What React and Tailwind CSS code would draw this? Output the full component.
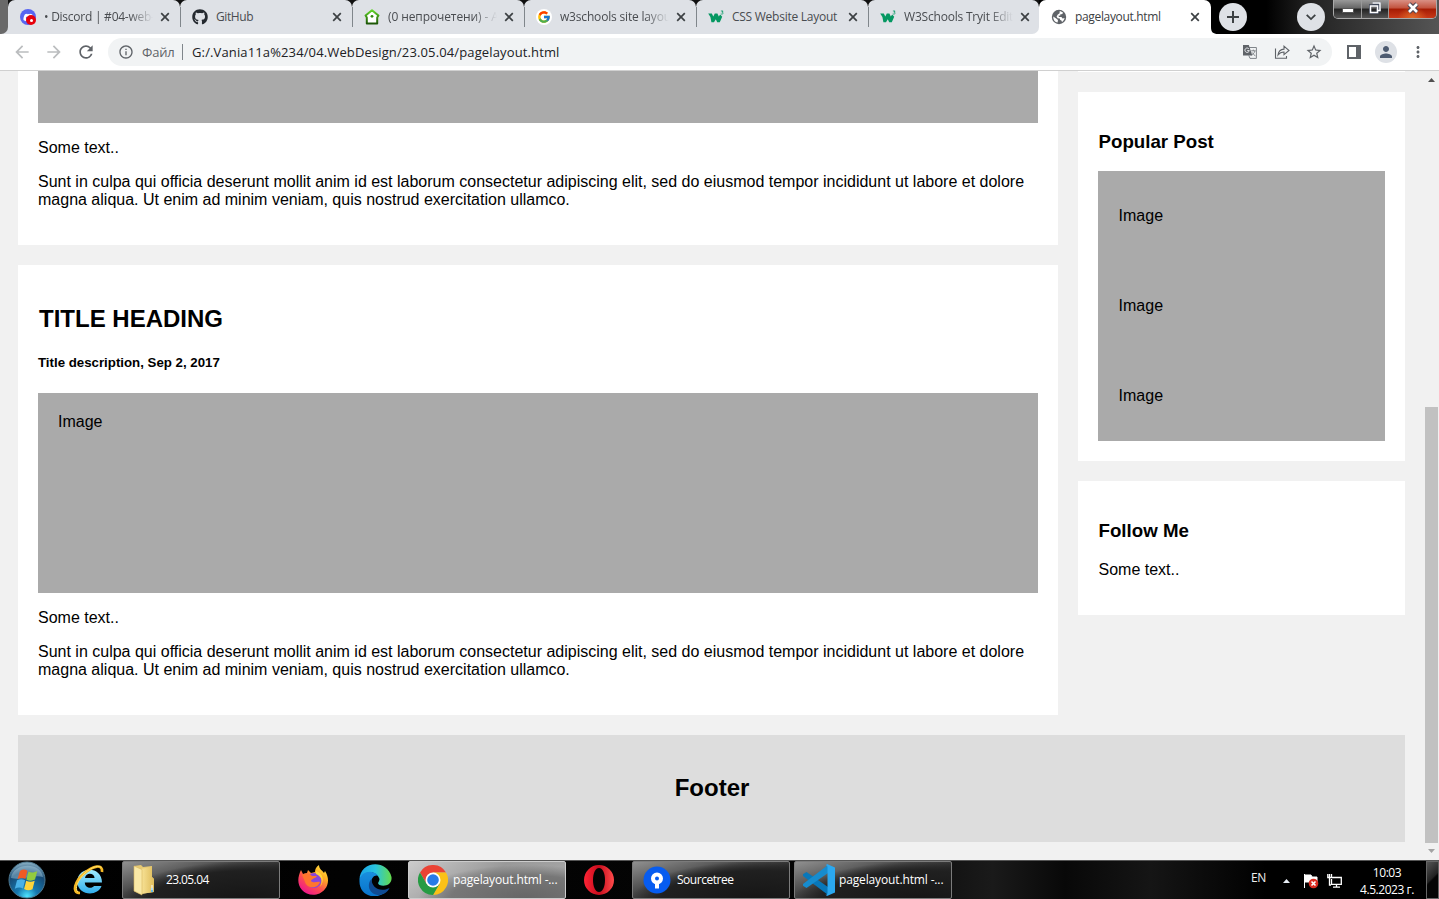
import React from 'react';
import { FaGithub, FaDiscord } from 'react-icons/fa';
import { FcGoogle } from 'react-icons/fc';
import { MdPerson, MdRefresh, MdArrowBack, MdArrowForward, MdInfoOutline, MdStarBorder, MdMoreVert } from 'react-icons/md';

const UI = "font-['Open_Sans','Noto_Sans',sans-serif]";

function Close() {
  return (
    <svg className="h-[10px] w-[10px] shrink-0" viewBox="0 0 10 10">
      <path d="M1.2 1.2l7.6 7.6M8.8 1.2L1.2 8.8" stroke="#3c4043" strokeWidth="1.7" />
    </svg>
  );
}

function DiscordIcon() {
  return (
    <span className="relative flex h-4 w-4 items-center justify-center rounded-full bg-[#5865f2]">
      <FaDiscord className="h-[11px] w-[11px] text-white" />
      <span className="absolute top-[6px] left-[6px] flex h-[10px] w-[10px] items-center justify-center rounded-full bg-[#e8000b]">
        <span className="h-[3px] w-[3px] rounded-full bg-white" />
      </span>
    </span>
  );
}

function HomeIcon() {
  return (
    <svg className="h-4 w-4" viewBox="0 0 16 16">
      <defs>
        <linearGradient id="hg" x1="0" y1="0" x2="0" y2="1"><stop offset="0" stopColor="#62d52a" /><stop offset="1" stopColor="#1d5708" /></linearGradient>
      </defs>
      <path d="M8 1.2L14.4 6.6 13.2 8.6V14.6H2.8V8.6L1.6 6.6Z" fill="#fff" stroke="url(#hg)" strokeWidth="2" strokeLinejoin="round" />
      <circle cx="8" cy="7.3" r="1.4" fill="#318a10" />
    </svg>
  );
}

function W3Icon() {
  return (
    <svg className="h-4 w-4" viewBox="0 0 16 16">
      <path d="M.2 4.6H3.8L5.3 7.4 6.8 4.4H9.4L10.8 7.6 12.2 5.6 14.2 7.8 11.8 13.2H9.2L7.8 10.2 6 13.2H3.4L2.4 8Z" fill="#059862" />
      <path d="M12.9 2h2.2l-1.1 1.2c1.6 0 1.3 2-.1 1.9-.5 0-.9-.2-1.1-.5" fill="none" stroke="#059862" strokeWidth=".8" />
    </svg>
  );
}

function GlobeIcon() {
  return (
    <svg className="h-4 w-4" viewBox="0 0 16 16">
      <circle cx="8" cy="8" r="7.2" fill="#5f6368" />
      <path d="M8.6 2.2C10 2.2 11.2 2.8 12.2 3.8L11 5.2 9.6 5 9.2 6.4 7.4 6.8 8 8H10.4L11.6 9.6 13.6 9C13.2 10.6 12.4 12 11 13L10.4 11.6 9.2 11 8.8 9.4 6.6 9.2 5.6 7.6 6.8 5.6 8.6 4.2Z" fill="#fff" />
      <path d="M2.2 7.4L5.2 9.4 7 11 6.6 13.6C4 13 2 10.8 2.2 7.4Z" fill="#fff" />
    </svg>
  );
}

function TranslateIcon() {
  return (
    <svg className="h-4 w-4" viewBox="0 0 16 16">
      <path d="M6.5 3.5H14.4V14.4H8L6.8 11.5" fill="#f1f3f4" stroke="#80858a" strokeWidth="1" />
      <path d="M9.2 6.8H13.6M11.3 5.6V6.8M13 6.8C12.4 9 11 10.3 9.6 11M10 8.4L13.4 12.2" fill="none" stroke="#777c81" strokeWidth=".9" />
      <path d="M1 1H6.8L10.3 11.4H1Z" fill="#5f6368" />
      <path d="M6.9 4.9A2.2 2.2 0 1 0 7.3 6.6H5.2" fill="none" stroke="#e8eaed" strokeWidth="1" />
    </svg>
  );
}

const tabs = [
  { icon: <DiscordIcon />, title: '• Discord | #04-web-design', fade: true, track: 'tracking-[-0.25px]', width: 'w-[172px]' },
  { icon: <FaGithub className="h-4 w-4 text-[#24292f]" />, title: 'GitHub', track: 'tracking-[-0.4px]', width: 'w-[172px]' },
  { icon: <HomeIcon />, title: '(0 непрочетени) - АБВ', fade: true, track: 'tracking-[-0.1px]', width: 'w-[172px]' },
  { icon: <span className="flex h-4 w-4 items-center justify-center rounded-full bg-white"><FcGoogle className="h-[14px] w-[14px]" /></span>, title: 'w3schools site layout', fade: true, track: 'tracking-[-0.18px]', width: 'w-[172px]' },
  { icon: <W3Icon />, title: 'CSS Website Layout', track: 'tracking-[-0.26px]', width: 'w-[172px]' },
  { icon: <W3Icon />, title: 'W3Schools Tryit Editor', fade: true, track: 'tracking-[-0.2px]', width: 'w-[171px]' },
];

function Tab({ t, last }) {
  return (
    <div className={`h-[34px] ${last ? 'bg-[linear-gradient(#111_50%,#fff_50%)]' : 'bg-[linear-gradient(#111_50%,#dee1e6_50%)]'}`}>
      <div className={`relative flex h-[34px] items-center rounded-t-[7px] bg-[#dee1e6] pl-3 ${t.width} ${last ? 'rounded-br-[7px]' : ''}`}>
        {t.icon}
        <span className={`ml-2 w-[109px] overflow-hidden whitespace-nowrap text-[12px] leading-4 text-[#494c50] ${t.track} ${t.fade ? 'mask-r-from-78% mask-r-to-100%' : ''}`}>{t.title}</span>
        <span className="ml-[7px] flex"><Close /></span>
        {!last && <span className="absolute top-[7px] right-[-1px] z-10 h-[20px] w-px bg-[#80868b]" />}
      </div>
    </div>
  );
}

function TabStrip() {
  return (
    <div className="flex h-[34px] shrink-0 bg-[linear-gradient(90deg,#686868_0,#555_10px,#000_100px,#000_88%,#222_91%,#555_100%)]">
      <div className="w-2 bg-[#dee1e6]"><div className="h-full w-full rounded-br-[7px] bg-[#696969]" /></div>
      {tabs.map((t, i) => <Tab key={t.title} t={t} last={i === 5} />)}
      <div className="flex w-[172px] items-center rounded-t-[7px] bg-white pl-3">
        <GlobeIcon />
        <span className="ml-2 w-[108px] text-[12px] leading-4 tracking-[-0.34px] text-[#3c4043]">pagelayout.html</span>
        <span className="ml-[7px] flex"><Close /></span>
      </div>
      <div className="flex w-2 items-end">
        <svg className="h-[7px] w-[7px]" viewBox="0 0 7 7"><path d="M0 0C0 5 2 7 7 7H0Z" fill="#fff" /></svg>
      </div>
      <div className="mt-[3px] flex h-7 w-7 items-center justify-center rounded-full bg-[#dee1e6]">
        <svg className="h-3 w-3" viewBox="0 0 12 12"><path d="M6 0V12M0 6H12" stroke="#3c4043" strokeWidth="2" /></svg>
      </div>
      <div className="mt-[3px] ml-[50px] flex h-7 w-7 items-center justify-center rounded-full bg-[#dee1e6]">
        <svg className="h-[10px] w-[10px]" viewBox="0 0 10 10"><path d="M.7 2.8L5 7.1 9.3 2.8" fill="none" stroke="#3c4043" strokeWidth="1.8" /></svg>
      </div>
      <div className="ml-[8px] flex h-[19px] w-[104px] overflow-hidden rounded-b-[5px] border border-t-0 border-[#aaa]">
        <div className="flex w-[28px] justify-center border-r border-[#999] bg-[linear-gradient(#999,#666_45%,#222_50%,#555)] pt-[8px]">
          <span className="h-[5px] w-[12px] border border-[#555] bg-white" />
        </div>
        <div className="flex w-[27px] justify-center border-r border-[#999] bg-[linear-gradient(#999,#666_45%,#222_50%,#555)] pt-[2px]">
          <svg className="h-3 w-3" viewBox="0 0 12 12">
            <path d="M3.5 1h7.5v7.5H9M1 3.5h7.5V11H1Z" fill="none" stroke="#3f4758" strokeWidth="2.5" />
            <path d="M3.5 1h7.5v7.5H9M1.5 4h7V10.5h-7Z" fill="none" stroke="#fff" strokeWidth="1.5" />
          </svg>
        </div>
        <div className="flex flex-1 justify-center bg-[radial-gradient(ellipse_at_bottom,#e06a28_0,transparent_45%),linear-gradient(#d99084,#c2523d_45%,#a51c04_50%,#c83818)] pt-[2px]">
          <svg className="h-3 w-3" viewBox="0 0 12 12">
            <path d="M2 2l8 8M10 2l-8 8" stroke="#4c4552" strokeWidth="4.6" />
            <path d="M2 2l8 8M10 2l-8 8" stroke="#fff" strokeWidth="2.6" />
          </svg>
        </div>
      </div>
    </div>
  );
}

function Toolbar() {
  return (
    <div className="flex h-[37px] shrink-0 items-center border-b border-[#d0d0d0] bg-white pl-3 text-[#5f6368]">
      <MdArrowBack className="h-5 w-5 text-[#bbbdbf]" />
      <MdArrowForward className="ml-3 h-5 w-5 text-[#bbbdbf]" />
      <MdRefresh className="ml-3 h-5 w-5" />
      <div className="ml-[12px] flex h-7 w-[1224px] items-center rounded-full bg-[#f1f3f4] pl-[10px]">
        <MdInfoOutline className="h-4 w-4" />
        <span className="ml-2 w-[34px] text-[13px] leading-5 tracking-[-0.2px] whitespace-nowrap">Файл</span>
        <span className="ml-[6px] h-4 w-px bg-[#80868b]" />
        <span className="ml-[9px] flex-1 text-[13px] leading-5 tracking-[0.13px] text-[#202124]">G:/.Vania11a%234/04.WebDesign/23.05.04/pagelayout.html</span>
        <TranslateIcon />
        <svg className="ml-4 h-4 w-4" viewBox="0 0 16 16" fill="none" stroke="#5f6368" strokeWidth="1.1">
          <path d="M1.5 4.5V14.3H12.5V12" />
          <path d="M4 11C4.5 7 7 5.2 10 5.1V2.2L15 6.5 10 10.6V8C7.5 8 5.5 9 4 11Z" />
        </svg>
        <MdStarBorder className="mr-[9px] ml-[15px] h-[18px] w-[18px]" />
      </div>
      <svg className="ml-[15px] h-[14px] w-[14px]" viewBox="0 0 14 14"><path d="M0 0H14V14H0ZM2 2V12H9V2Z" fill="#5f6368" fillRule="evenodd" /></svg>
      <span className="ml-[14px] flex h-[22px] w-[22px] items-center justify-center rounded-full bg-[#dee1e6]"><MdPerson className="h-[18px] w-[18px] text-[#4c5a70]" /></span>
      <MdMoreVert className="ml-[12px] h-[18px] w-[18px]" />
    </div>
  );
}

function PostText() {
  return (
    <>
      <p className="my-4">Some text..</p>
      <p className="my-4">Sunt in culpa qui officia deserunt mollit anim id est laborum consectetur adipiscing elit, sed do eiusmod tempor incididunt ut labore et dolore<br />magna aliqua. Ut enim ad minim veniam, quis nostrud exercitation ullamco.</p>
    </>
  );
}

function Page() {
  return (
    <div className="flex h-[789px] shrink-0 overflow-hidden bg-[#f1f1f1] font-['Liberation_Sans',Arial,sans-serif] text-[16px] leading-[18px] text-black">
      <main className="w-[1424px] pl-[18px]">
        <div className="flex h-[644px] gap-5">
          <div className="w-[1040px]">
            <section className="h-[174px] bg-white px-5">
              <div className="h-[52px] bg-[#aaa]" />
              <PostText />
            </section>
            <section className="mt-5 h-[450px] bg-white px-5 pt-10">
              <h2 className="h-7 pl-px text-[24px] leading-7 font-bold">TITLE HEADING</h2>
              <h5 className="mt-[22px] h-[15px] text-[13.28px] leading-[15px] font-bold">Title description, Sep 2, 2017</h5>
              <div className="mt-[23px] h-[200px] bg-[#aaa] p-5">Image</div>
              <PostText />
            </section>
          </div>
          <aside className="w-[327px]">
            <div className="h-px bg-white" />
            <section className="mt-5 h-[369px] bg-white px-5 pt-[39px]">
              <h3 className="h-[22px] pl-[0.5px] text-[18.72px] leading-[22px] font-bold">Popular Post</h3>
              <div className="mt-[18px] bg-[#aaa] px-[20.6px]">
                {[1, 2, 3].map((n) => <p key={n} className="h-[90px] pt-9">Image</p>)}
              </div>
            </section>
            <section className="mt-5 h-[134px] bg-white px-[20.5px] pt-[39px]">
              <h3 className="h-[22px] text-[18.72px] leading-[22px] font-bold">Follow Me</h3>
              <p className="mt-[19px]">Some text..</p>
            </section>
          </aside>
        </div>
        <footer className="mt-5 h-[107px] w-[1387px] bg-[#ddd] pt-[39px] pl-px text-center">
          <h2 className="text-[24px] leading-7 font-bold">Footer</h2>
        </footer>
      </main>
      <div className="flex w-[15px] flex-col items-center">
        <svg className="mt-[7px] h-1 w-[7px]" viewBox="0 0 7 4"><path d="M0 4L3.5 0 7 4Z" fill="#505050" /></svg>
        <div className="mt-[325px] h-[436px] w-[13px] bg-[#c1c1c1]" />
        <svg className="mt-[6px] h-1 w-[7px]" viewBox="0 0 7 4"><path d="M0 0L3.5 4 7 0Z" fill="#a3a3a3" /></svg>
      </div>
    </div>
  );
}

function StartIcon() {
  return (
    <svg className="h-[38px] w-[38px]" viewBox="0 0 38 38">
      <defs>
        <radialGradient id="orb" cx=".5" cy=".95" r=".95"><stop offset="0" stopColor="#4ee5ff" /><stop offset=".3" stopColor="#1779b0" /><stop offset=".7" stopColor="#174a75" /><stop offset="1" stopColor="#8fb5c8" /></radialGradient>
      </defs>
      <circle cx="19" cy="19" r="18" fill="url(#orb)" stroke="#4d7890" />
      <path d="M3 17C5 2 32 0 35 16 25 13 14 20 3 17Z" fill="#b8dcec" opacity=".4" />
      <path d="M12 10C14.5 8.2 17 8.2 19.4 9.8L17.4 18C14.8 16.6 12.4 16.6 9.4 18.2Z" fill="#ef5b24" />
      <path d="M20.5 10.4C23 12 25.8 12 29.3 10.1L27 18.6C24 20.1 21 20 18.4 18.5Z" fill="#92cb3e" />
      <path d="M9 19.3C12 17.8 14.6 17.9 17.1 19.2L15 27.6C12.5 26.1 10 26.1 6.8 27.8Z" fill="#49b1e8" />
      <path d="M18.2 19.7C20.8 21.1 23.7 21.1 26.7 19.7L24.5 28.2C21.5 29.8 18.8 29.6 16.1 28Z" fill="#ffd43b" />
    </svg>
  );
}

function IEIcon() {
  return (
    <svg className="h-8 w-8" viewBox="0 0 32 32">
      <defs><linearGradient id="ie" x1="0" y1="0" x2="0" y2="1"><stop offset="0" stopColor="#a2edff" /><stop offset="1" stopColor="#31adec" /></linearGradient></defs>
      <path d="M29 18.5H11.8C12 24.6 19 25 21 22H28.5C25 33 4.5 32 4.2 17.5 4.5 2 29 1 29 18.5ZM12 14H21.6C21 8.6 13 8.4 12 14Z" fill="url(#ie)" fillRule="evenodd" />
      <path d="M7 29C-2 29 2 17 11 9.5 20 1.5 30-.5 29 8" fill="none" stroke="#f6b925" strokeWidth="2.7" />
      <path d="M5 28C1 25 5 16 12 9 20 2 27 1 28.5 4" fill="none" stroke="#ffe26a" />
    </svg>
  );
}

function FolderIcon() {
  return (
    <svg className="h-8 w-6" viewBox="0 0 24 32">
      <defs><linearGradient id="fold"><stop offset="0" stopColor="#f8e398" /><stop offset="1" stopColor="#dfbc5b" /></linearGradient></defs>
      <path d="M2 2L9 1 11 3 20 2V13L22 15V28L8 30 2 27Z" fill="#e5c873" />
      <path d="M9 5L20 2.5V13L22 15V28L9 30Z" fill="url(#fold)" />
      <path d="M2 2L10 5.5V31L2 27Z" fill="#f9e8a6" stroke="#d7b65e" strokeWidth=".6" />
      <path d="M20 24V28" stroke="#65b9ea" strokeWidth="2" /><path d="M20 21V26" stroke="#fff" strokeWidth="1" />
    </svg>
  );
}

function FirefoxIcon() {
  return (
    <svg className="h-8 w-8" viewBox="0 0 32 32">
      <defs><linearGradient id="fx" x1="1" y1="0" x2=".3" y2="1"><stop offset="0" stopColor="#fff44f" /><stop offset=".35" stopColor="#ffae22" /><stop offset=".65" stopColor="#ff514b" /><stop offset="1" stopColor="#ed168d" /></linearGradient></defs>
      <path d="M4 6L6 10 10 9 11 6 14 9 18 8C18 5 19 3 22 1 22 5 25 6 27 9L28 7C32 13 32 20 28 25 22 33 10 32 5 26-.2 20 .7 13 4 6Z" fill="url(#fx)" />
      <circle cx="17" cy="16.5" r="7.5" fill="#8a45db" />
      <path d="M5 11C8 9 12 9 15 12L20 12C18 15 15 14 14 17 17 20 20 17 23 18 21 25 10 25 8 18 7 15 6 13 5 11Z" fill="#ff762d" />
      <path d="M19 7C26 9 28 17 23 23 27 15 23 12 19 10Z" fill="#ffd43d" />
    </svg>
  );
}

function EdgeIcon() {
  return (
    <svg className="h-8 w-[33px]" viewBox="0 0 32 32">
      <defs>
        <linearGradient id="ed"><stop offset="0" stopColor="#1aa3e8" /><stop offset=".5" stopColor="#29c4de" /><stop offset="1" stopColor="#65dc4c" /></linearGradient>
        <linearGradient id="ee" x1="0" y1="0" x2="0" y2="1"><stop offset="0" stopColor="#198fde" /><stop offset="1" stopColor="#0873cc" /></linearGradient>
      </defs>
      <path d="M0 16C0-4 28-5 32 13 33 21 25 23 20 21 17 19 20 18 20 15 17 7 6 5 0 16Z" fill="url(#ed)" />
      <path d="M0 16C2 7 13 5 19 12 14 10 10 16 13 23 16 29 23 29 29 25 19 38-1 33 0 16Z" fill="url(#ee)" />
      <path d="M12 15C7 20 9 31 20 31 25 30 28 28 30 24 20 29 12 23 12 15Z" fill="#104b93" />
    </svg>
  );
}

function ChromeIcon() {
  return (
    <svg className="h-[30px] w-[30px]" viewBox="0 0 30 30">
      <path d="M2 7.5A15 15 0 0 1 28 7.5H15L8.5 18.8Z" fill="#ea4335" />
      <path d="M28 7.5A15 15 0 0 1 15 30L21.5 18.8 15 7.5Z" fill="#fbc116" />
      <path d="M2 7.5A15 15 0 0 0 15 30L21.5 18.8H8.5Z" fill="#269b43" />
      <circle cx="15" cy="15" r="7.5" fill="#fff" /><circle cx="15" cy="15" r="5.8" fill="#287be8" />
    </svg>
  );
}

function OperaIcon() {
  return (
    <svg className="h-[30px] w-[30px]" viewBox="0 0 30 30">
      <defs><linearGradient id="op" x1="0" x2="1"><stop offset="0" stopColor="#ff2435" /><stop offset=".5" stopColor="#c70d1d" /><stop offset="1" stopColor="#ff4b4b" /></linearGradient></defs>
      <path fillRule="evenodd" d="M15 0A15 15 0 1 0 15 30A15 15 0 1 0 15 0ZM15 3C23 3 23 27 15 27S7 3 15 3Z" fill="url(#op)" />
    </svg>
  );
}

function SourceIcon() {
  return (
    <svg className="h-7 w-7" viewBox="0 0 28 28">
      <circle cx="14" cy="14" r="13.5" fill="#075cf0" />
      <circle cx="14" cy="12.5" r="4" fill="none" stroke="#fff" strokeWidth="4" />
      <path d="M14 17V22.5" stroke="#fff" strokeWidth="4" />
    </svg>
  );
}

function CodeIcon() {
  return (
    <svg className="h-8 w-8" viewBox="0 0 32 32">
      <path d="M0 10.3L3.5 8 25 23V31L0 12Z" fill="#0877b9" />
      <path d="M0 21.7L3.5 24 25 9V1L0 20Z" fill="#168ccf" />
      <path d="M24 0L32 3.5V28.5L24 32 22.5 30.5C24 31 24.5 30 24.5 29V3C24.5 1.5 23.5 1 22.5 1.7Z" fill="#2ba8f0" />
    </svg>
  );
}

function TaskButton({ icon, text, className, active, gap, track }) {
  const bg = active
    ? 'bg-[radial-gradient(ellipse_at_75%_100%,#666_0,#777_45%,transparent_65%),linear-gradient(145deg,#ccc,#999_48%,#aaa)] border-[#ccc]'
    : 'bg-[radial-gradient(ellipse_at_80%_110%,#151515_0,#202020_55%,transparent_72%),linear-gradient(165deg,#909090_0,#484848_40%,#222_70%)] border-[#7b7b7b]';
  return (
    <div className={`flex h-[38px] w-[158px] items-center rounded-[2px] border ${bg} ${className}`}>
      {icon}
      <span className={`whitespace-nowrap text-[12px] leading-4 text-white ${track} ${gap}`}>{text}</span>
    </div>
  );
}

function Taskbar() {
  return (
    <div className="flex h-[39px] shrink-0 items-start border-t border-[#555] bg-[linear-gradient(90deg,#000_0,#050505_60%,#1a1a1a_69%,#080808_74%,#151515_80%,#000_88%)]">
      <div className="ml-2"><StartIcon /></div>
      <div className="mt-[3px] ml-[27px]"><IEIcon /></div>
      <TaskButton icon={<FolderIcon />} text="23.05.04" className="ml-[17px] pl-[9px]" gap="ml-[10px]" track="tracking-[-0.6px]" />
      <div className="mt-[3px] ml-[17px]"><FirefoxIcon /></div>
      <div className="mt-[3px] ml-[30px]"><EdgeIcon /></div>
      <TaskButton active icon={<ChromeIcon />} text="pagelayout.html -..." className="ml-[16px] pl-[9px]" gap="ml-[5px]" track="tracking-[-0.14px]" />
      <div className="mt-[4px] ml-[18px]"><OperaIcon /></div>
      <TaskButton icon={<SourceIcon />} text="Sourcetree" className="ml-[18px] pl-[10px]" gap="ml-[6px]" track="tracking-[-0.48px]" />
      <TaskButton icon={<CodeIcon />} text="pagelayout.html -..." className="ml-[4px] pl-[8px]" gap="ml-[4px]" track="tracking-[-0.14px]" />
      <span className="mt-[9px] ml-[299px] w-[17px] text-[12px] leading-4 tracking-[-0.3px] text-[#eee]">EN</span>
      <svg className="mt-[18px] ml-[15px] h-1 w-[7px]" viewBox="0 0 7 4"><path d="M0 4L3.5 0 7 4Z" fill="#e8edf5" /></svg>
      <svg className="mt-[12px] ml-[13px] h-4 w-4" viewBox="0 0 16 16">
        <path d="M1.5 1V15M2 2H8L9 4H14V9H2Z" fill="#fff" stroke="#fff" />
        <circle cx="10.5" cy="10.5" r="4.8" fill="#d92b20" /><path d="M8.5 8.5l4 4M12.5 8.5l-4 4" stroke="#fff" strokeWidth="1.6" />
      </svg>
      <svg className="mt-[12px] ml-[8px] h-4 w-4" viewBox="0 0 16 16" fill="none" stroke="#fff" strokeWidth="1.3">
        <path d="M5 4.5H14.3V11.3H4.5V6M9.5 11V14M6 14.2H13" /><path d="M.8 1V4.5H4.5V1M2.5 1V5V12H4" />
      </svg>
      <div className="mt-[3px] ml-[14px] w-[60px] text-center text-[12px] leading-[17px] tracking-[-0.45px] whitespace-nowrap text-white">
        <div>10:03</div><div>4.5.2023 г.</div>
      </div>
      <div className="ml-[9px] h-[38px] flex-1 border border-[#666] bg-[linear-gradient(135deg,#555,#222_45%,#050505_50%)]" />
    </div>
  );
}

export default function App() {
  return (
    <div className={`flex h-[899px] w-[1439px] flex-col overflow-hidden ${UI}`}>
      <TabStrip />
      <Toolbar />
      <Page />
      <Taskbar />
    </div>
  );
}
